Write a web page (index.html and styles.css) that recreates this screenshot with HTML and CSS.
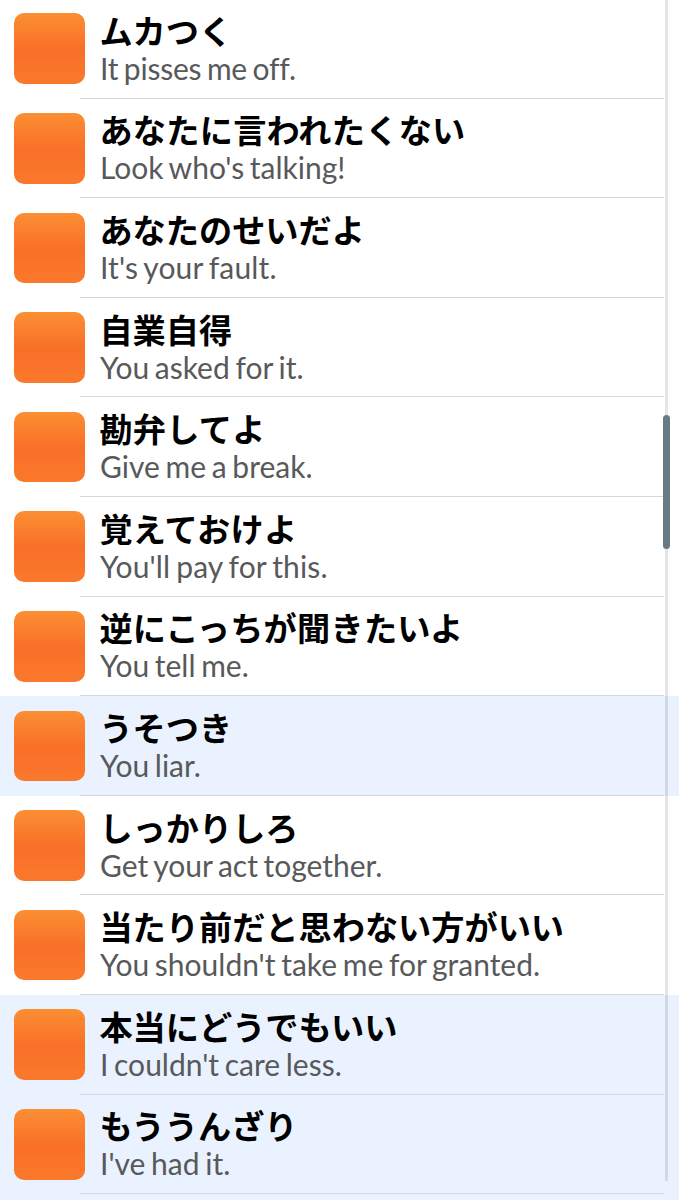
FILE: index.html
```html
<!DOCTYPE html>
<html lang="ja">
<head>
  <meta charset="UTF-8">
  <title>Phrases</title>
  <link rel="stylesheet" href="styles.css">
</head>
<body>
  <ul class="list">
    <li class="row">
      <div class="icon"></div>
      <div class="text"><p class="ja">ムカつく</p><p class="en tight">It pisses me off.</p></div>
    </li>
    <li class="row">
      <div class="icon"></div>
      <div class="text"><p class="ja wide">あなたに言われたくない</p><p class="en">Look who's talking!</p></div>
    </li>
    <li class="row">
      <div class="icon"></div>
      <div class="text"><p class="ja">あなたのせいだよ</p><p class="en loose">It's your fault.</p></div>
    </li>
    <li class="row">
      <div class="icon"></div>
      <div class="text"><p class="ja">自業自得</p><p class="en">You asked for it.</p></div>
    </li>
    <li class="row">
      <div class="icon"></div>
      <div class="text"><p class="ja wide">勘弁してよ</p><p class="en">Give me a break.</p></div>
    </li>
    <li class="row">
      <div class="icon"></div>
      <div class="text"><p class="ja wide">覚えておけよ</p><p class="en loose">You'll pay for this.</p></div>
    </li>
    <li class="row">
      <div class="icon"></div>
      <div class="text"><p class="ja wide">逆にこっちが聞きたいよ</p><p class="en">You tell me.</p></div>
    </li>
    <li class="row selected">
      <div class="icon"></div>
      <div class="text"><p class="ja">うそつき</p><p class="en">You liar.</p></div>
    </li>
    <li class="row">
      <div class="icon"></div>
      <div class="text"><p class="ja">しっかりしろ</p><p class="en">Get your act together.</p></div>
    </li>
    <li class="row">
      <div class="icon"></div>
      <div class="text"><p class="ja">当たり前だと思わない方がいい</p><p class="en">You shouldn't take me for granted.</p></div>
    </li>
    <li class="row selected">
      <div class="icon"></div>
      <div class="text"><p class="ja">本当にどうでもいい</p><p class="en">I couldn't care less.</p></div>
    </li>
    <li class="row selected">
      <div class="icon"></div>
      <div class="text"><p class="ja">もううんざり</p><p class="en">I've had it.</p></div>
    </li>
    <li class="row-end selected"></li>
  </ul>
  <div class="track"></div>
  <div class="thumb"></div>
</body>
</html>
```

FILE: styles.css
```css
* { box-sizing: border-box; }
body {
  margin: 0;
  height: 1200px;
  overflow: hidden;
  background: #fff;
  position: relative;
}
.list {
  list-style: none;
  margin: -1px 0 0;
  padding: 0;
}
.row {
  display: flex;
  align-items: flex-start;
  height: 99.6px;
  padding: 14.4px 0 0 14.4px;
}
.row-end { height: 5.8px; }
.selected { background: #e9f2fe; }
.icon {
  flex: none;
  width: 70.6px;
  height: 70.6px;
  border-radius: 10px;
  background: linear-gradient(#fb8f33, #f96f28 52%, #fa792c);
}
/* the separator starts a little left of the icon's right edge */
.text {
  flex: 1;
  height: 85.2px;
  margin: 0 15px 0 -5px;
  padding-left: 20px;
  border-bottom: 1px solid #d3d6db;
  white-space: nowrap;
}
.ja, .en { margin: 0; }
.ja {
  font: bold 33.2px/38px "Noto Sans CJK JP", sans-serif;
  margin: -2.6px 0 1px -0.6px;
  color: #000;
}
.wide { letter-spacing: 0.25px; }
.en {
  font: 30px/36px Lato, sans-serif;
  word-spacing: -2px;
  font-variant-ligatures: none;
  color: #58595b;
}
.tight { letter-spacing: -0.2px; }
.loose { letter-spacing: 0.15px; }
.track {
  position: absolute;
  top: 0;
  left: 665px;
  width: 3px;
  height: 1181px;
  background: rgba(0, 0, 0, 0.1);
}
.thumb {
  position: absolute;
  top: 415px;
  left: 663px;
  width: 7px;
  height: 134px;
  border-radius: 4px;
  background: #6a7a85;
}
```
